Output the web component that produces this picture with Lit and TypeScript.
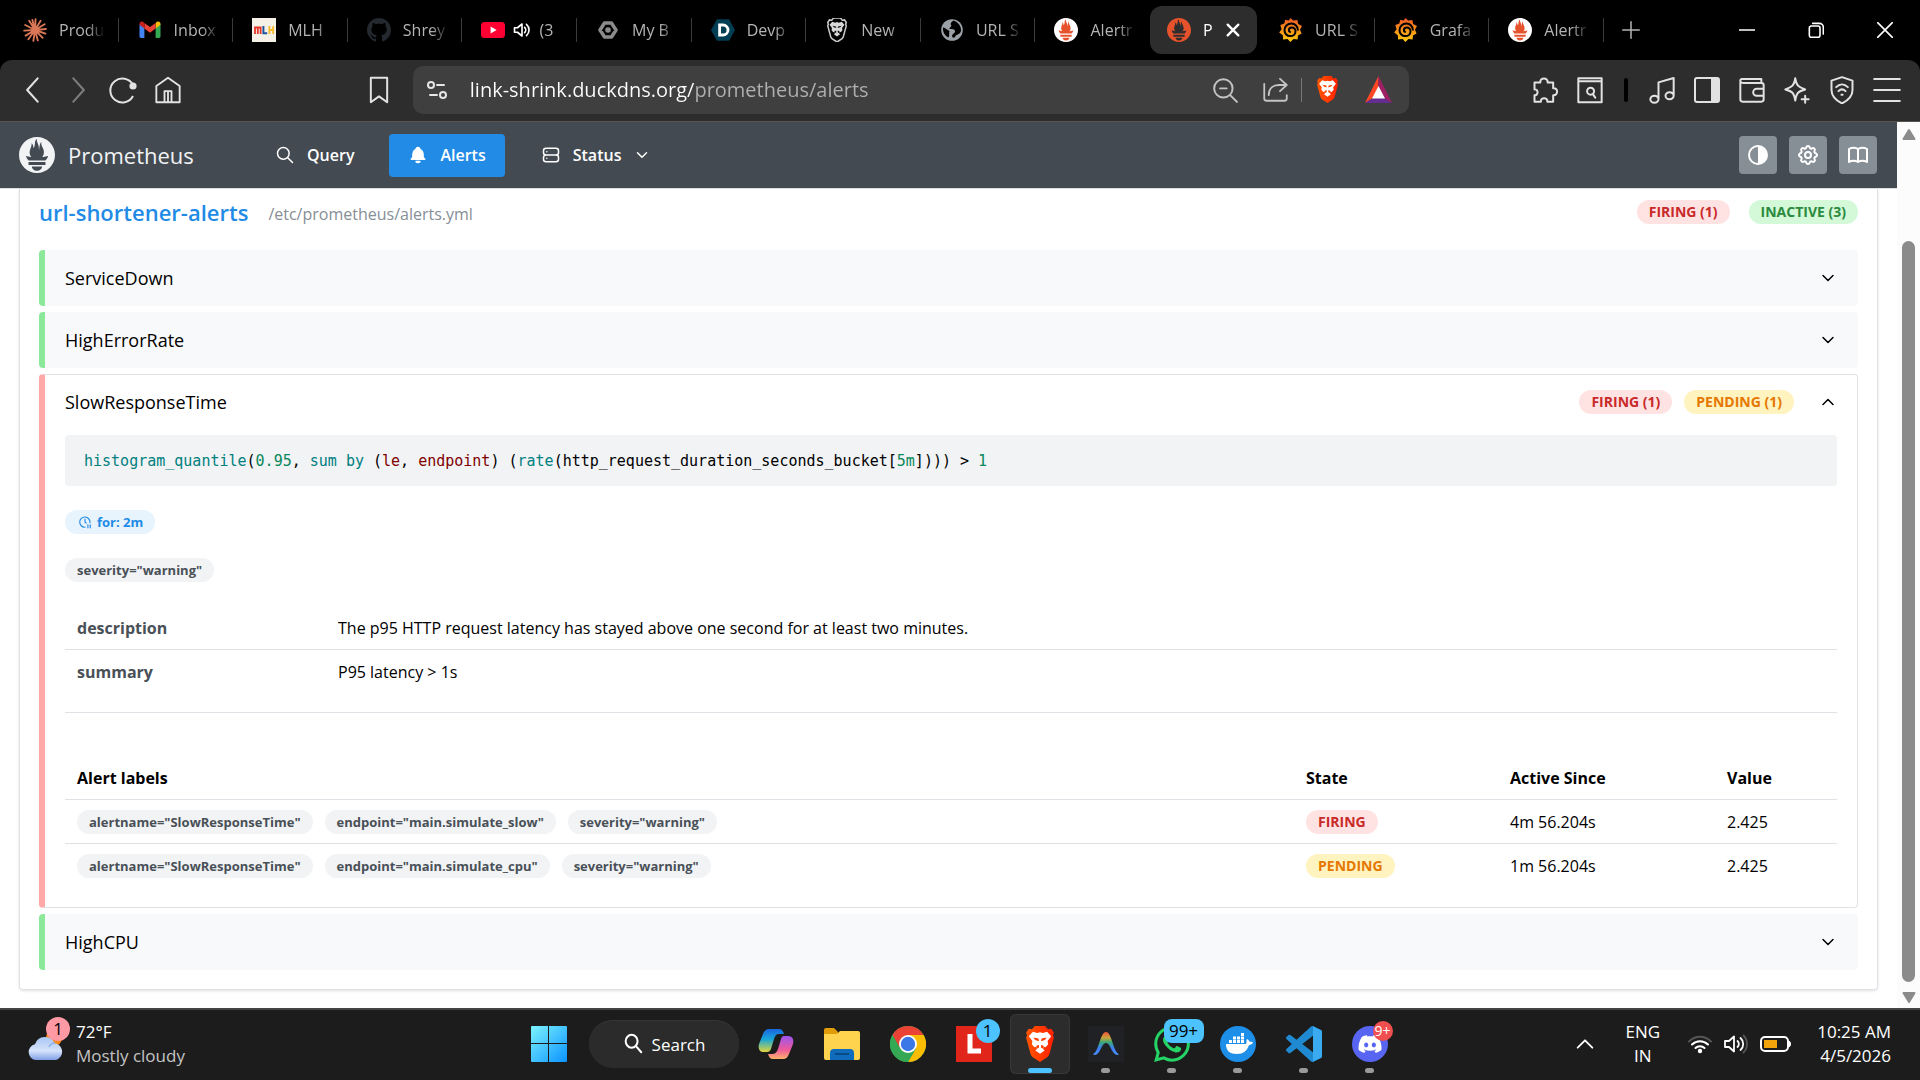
import { LitElement, html, css, svg, nothing } from "lit";
import type { TemplateResult } from "lit";
import { customElement, state } from "lit/decorators.js";
import { classMap } from "lit/directives/class-map.js";

const TORCH =
  "M12 0C5.373 0 0 5.372 0 12c0 6.627 5.373 12 12 12s12-5.373 12-12c0-6.628-5.373-12-12-12zm0 22.46c-1.885 0-3.414-1.26-3.414-2.814h6.828c0 1.553-1.528 2.813-3.414 2.813zm5.64-3.745H6.36v-2.046h11.28v2.046zm-.04-3.098H6.391c-.037-.043-.075-.086-.111-.13-1.155-1.401-1.427-2.133-1.69-2.879-.005-.025 1.4.287 2.395.511 0 0 .513.119 1.262.255-.72-.843-1.147-1.915-1.147-3.01 0-2.406 1.845-4.508 1.18-6.207.648.053 1.34 1.367 1.387 3.422.689-.951.977-2.69.977-3.755 0-1.103.727-2.385 1.454-2.429-.648 1.069.168 1.984.894 4.256.272.854.237 2.29.447 3.201.07-1.892.395-4.652 1.595-5.605-.529 1.2.079 2.702.494 3.424.671 1.164 1.078 2.047 1.078 3.716a4.642 4.642 0 01-1.11 2.996c.792-.149 1.34-.283 1.34-.283l2.573-.502s-.374 1.538-1.81 3.019z";

/** Wraps shapes in a square svg of the given size. */
const icon = (size: number, box: string, body: TemplateResult<2>) =>
  html`<svg width=${size} height=${size} viewBox=${box} aria-hidden="true">${body}</svg>`;

/** Outline icon on a 24 unit grid that takes the text colour. */
const line = (size: number, d: string, width = 2) =>
  icon(
    size,
    "0 0 24 24",
    svg`<path d=${d} fill="none" stroke="currentColor" stroke-width=${width} stroke-linecap="round" stroke-linejoin="round"/>`
  );

const promWhite = icon(
  24,
  "0 0 24 24",
  svg`<circle cx="12" cy="12" r="11.500" fill="#e6522c"/><path d=${TORCH} fill="#fff"/>`
);
const promOrange = icon(
  24,
  "0 0 24 24",
  svg`<circle cx="12" cy="12" r="11" fill="#2d2d2d"/><path d=${TORCH} fill="#e6522c"/>`
);

const claude = icon(
  24,
  "0 0 24 24",
  svg`<g stroke="#d97757" stroke-width="1.9" stroke-linecap="round">
    <path d="M12 12L12.6 1.2M12 12L17.6 2.8M12 12L21.6 6.2M12 12L23 11M12 12L22.4 15.6M12 12L19.6 19.8M12 12L14.8 22.4M12 12L10.4 22.8M12 12L5.4 21.2M12 12L2.6 17.6M12 12L1.2 12.6M12 12L2.2 7M12 12L6.2 2.8M12 12L9.4 2"/></g>`
);

const gmail = icon(
  24,
  "0 0 24 24",
  svg`<path d="M1.5 6v12.6A1.5 1.5 0 0 0 3 20h3.4V9.6z" fill="#4285f4"/>
    <path d="M22.5 6v12.6A1.5 1.5 0 0 1 21 20h-3.4V9.6z" fill="#34a853"/>
    <path d="M17.6 4.9v5.6l4.9-3.7V6c0-2.3-2.4-3-3.8-2z" fill="#fbbc04"/>
    <path d="M6.4 10.5V4.9l5.6 4.2 5.6-4.2v5.6L12 14.8z" fill="#ea4335"/>
    <path d="M1.5 6v.8l4.9 3.7V4.9L5.3 4C3.900 3 1.500 3.700 1.500 6z" fill="#c5221f"/>`
);

const mlh = icon(
  24,
  "0 0 24 24",
  svg`<rect width="24" height="24" fill="#f6f1e7"/>
    <path d="M3 16V9.500h5.600V16M5.800 9.500V16" fill="none" stroke="#e73427" stroke-width="1.800"/>
    <path d="M11.400 8v7.200h3.800" fill="none" stroke="#1d539f" stroke-width="2"/>
    <path d="M17.400 8v8M21.200 8v8M17.400 12h4" fill="none" stroke="#f8b92a" stroke-width="1.800"/>`
);

const github = icon(
  24,
  "0 0 16 16",
  svg`<path fill="#24292f" d="M8 0C3.58 0 0 3.58 0 8c0 3.54 2.29 6.53 5.47 7.59.4.07.55-.17.55-.38 0-.19-.01-.82-.01-1.49-2.01.37-2.53-.49-2.69-.94-.09-.23-.48-.94-.82-1.13-.28-.15-.68-.52-.01-.53.63-.01 1.08.58 1.23.82.72 1.21 1.87.87 2.33.66.07-.52.28-.87.51-1.07-1.78-.2-3.64-.89-3.64-3.95 0-.87.31-1.59.82-2.15-.08-.2-.36-1.02.08-2.12 0 0 .67-.21 2.2.82.64-.18 1.32-.27 2-.27s1.36.09 2 .27c1.53-1.04 2.2-.82 2.2-.82.44 1.1.16 1.92.08 2.12.51.56.82 1.27.82 2.15 0 3.07-1.87 3.75-3.65 3.95.29.25.54.73.54 1.48 0 1.07-.01 1.93-.01 2.2 0 .21.15.46.55.38A8.01 8.01 0 0016 8c0-4.42-3.58-8-8-8z"/>`
);

const youtube = icon(
  24,
  "0 0 24 24",
  svg`<rect y="4" width="24" height="16" rx="3.500" fill="#ff0033"/><path d="M9.600 8.600v6.800l6-3.400z" fill="#fff"/>`
);

const speakerTab = icon(
  18,
  "0 0 24 24",
  svg`<path d="M2 9v6h4l6 5V4L6 9z" fill="none" stroke="#fff" stroke-width="2.200" stroke-linejoin="round"/>
    <path d="M15.500 8.500a5 5 0 0 1 0 7M18 4.500a10 10 0 0 1 0 15" fill="none" stroke="#fff" stroke-width="2.200" stroke-linecap="round"/>`
);

const gcp = icon(
  24,
  "0 0 24 24",
  svg`<path d="M8.500 5h7l4.500 7-4.500 7h-7L4 12z" fill="none" stroke="#8b8b8b" stroke-width="3.600" stroke-linejoin="round"/>
    <circle cx="12" cy="12" r="2.800" fill="#8b8b8b"/><path d="M17 2l4 7M7 22l-4-7" stroke="#000" stroke-width="1.200"/>`
);

const devpost = icon(
  24,
  "0 0 24 24",
  svg`<path d="M6 1.200h12l6 10.800-6 10.800H6L0 12z" fill="#003e54"/>
    <path d="M8.600 7h3.400a5 5 0 0 1 0 10H8.600z" fill="none" stroke="#fff" stroke-width="2.800"/>`
);

const LION_HEAD =
  "M8 0h8l2.200 2.500 2.600-.3 2 3-.7 2 .7 2-3.600 13.200-1.300 1.800L12 28l-5.900-3.800-1.300-1.800L1.200 9.200l.7-2-.7-2 2-3 2.600.3z";
const LION_FACE =
  "M12 4.800l2.200.6 3.300-1 3.200 3.600-2.800 3.600.5 2.600-2 2.400-1.400-.5-.6 1.800 1.200 1.100L12 21.600 8.400 19l1.200-1.100-.6-1.800-1.400.5-2-2.400.5-2.600L3.300 8l3.200-3.600 3.300 1z";
const LION_LINES =
  "M6.800 9l4 .8.400 2-3-1zM17.200 9l-4 .8-.4 2 3-1zM9 15.500l2-1 .3 2.200-1.700 1zM15 15.500l-2-1-.3 2.200 1.700 1z";

const brave = (size: number) =>
  icon(
    size,
    "-2 0 28 28",
    svg`<linearGradient id="lion" x1="0" x2="1"><stop offset="0" stop-color="#ff5500"/><stop offset="1" stop-color="#ff2000"/></linearGradient>
      <path d=${LION_HEAD} fill="url(#lion)"/><path d=${LION_FACE} fill="#fff"/><path d=${LION_LINES} fill="#ff4000"/>`
  );

const braveMono = icon(
  24,
  "-2 0 28 28",
  svg`<path d=${LION_HEAD} fill="none" stroke="#c9c9c9" stroke-width="1.800"/>
    <path d=${LION_FACE} fill="#d8d8d8"/><path d=${LION_LINES} fill="#111"/>`
);

const globe = icon(
  24,
  "0 0 24 24",
  svg`<circle cx="12" cy="12" r="10.800" fill="#9aa0a6"/>
    <path d="M13.500 2.500c-1 1-3.500 2-2.500 4.500 1.500 1.500-2 2.500-1.500 4 2.500.5 5-.5 5.500 2s-3 2.500-3 5.500c1 1.500 2.500 1.500 3 .5 1-3 5-2 6-6 .5-5-3-9-7.500-10.500z" fill="#000"/>
    <path d="M3 9.500c2.500 0 4 2.500 6.500 3.500-1 2 .5 4-1 6.500C5 18 2.500 14 3 9.500z" fill="#000"/>`
);

const grafana = icon(
  24,
  "0 0 24 24",
  svg`<linearGradient id="graf" x1="0" y1="0" x2="0" y2="1"><stop offset="0" stop-color="#f05a28"/><stop offset="1" stop-color="#fbca0a"/></linearGradient>
    <path d="M11.500 0l2.700 2.600 4.200-.6.800 4 3.800 2-2 3.700 1.600 3.900-3.600 1.900-.4 4-4-.5-3.300 3-2.700-3-4.500.500-.3-4.200L.2 14.500l2.400-3.300L1.300 7l4-1.600.9-3.700 3.500.8z" fill="url(#graf)"/>
    <path d="M19 12.500c0-4-3-7-6.600-7-4 0-6.900 3-6.900 6.700 0 3.500 2.700 5.900 5.700 5.900 3.200 0 5.300-2.200 5.300-4.900 0-2.200-1.700-3.800-3.700-3.800-1.800 0-2.900 1.300-2.900 2.700 0 1.200.8 2 1.900 2" fill="none" stroke="#000" stroke-width="2"/>`
);

const braveTriangle = icon(
  27,
  "0 0 27 27",
  svg`<path d="M13.500 0L0 27l8-5 5.500-11z" fill="#ff4724"/><path d="M13.500 0L27 27l-8-5-5.500-11z" fill="#9e1f63"/>
    <path d="M0 27h27l-8-5H8z" fill="#662d91"/><path d="M13.500 10L20 22.500H7z" fill="#fff"/>`
);

const cloud = icon(
  38,
  "0 0 38 38",
  svg`<linearGradient id="cl" x1="0" y1="0" x2="0" y2="1"><stop offset="0" stop-color="#a9c6f5"/><stop offset=".6" stop-color="#d6e3fa"/><stop offset="1" stop-color="#7fa0e8"/></linearGradient>
    <circle cx="27" cy="13" r="8" fill="#f58a1f"/>
    <path d="M9 35a8 8 0 0 1-1-15.800 10.500 10.500 0 0 1 19.500-1A8.600 8.600 0 0 1 29 35z" fill="url(#cl)"/>
    <path d="M22 22a7 7 0 0 1 6-4" fill="none" stroke="#8eb0ee" stroke-width="1.500"/>`
);

const start = icon(
  36,
  "0 0 36 36",
  svg`<linearGradient id="win" x1="0" y1="0" x2="1" y2="1"><stop offset="0" stop-color="#7df3ff"/><stop offset="1" stop-color="#0a93ff"/></linearGradient>
    <path d="M1 0h16v17H0V1a1 1 0 0 1 1-1zM18 0h17a1 1 0 0 1 1 1v16H18zM0 18h17v18H1a1 1 0 0 1-1-1zM18 18h18v17a1 1 0 0 1-1 1H18z" fill="url(#win)"/>`
);

const copilot = icon(
  36,
  "0 0 36 36",
  svg`<linearGradient id="cpa" x1="0" y1="0" x2="0" y2="1"><stop offset="0" stop-color="#1a66e0"/><stop offset=".45" stop-color="#18a6d8"/><stop offset="1" stop-color="#e3d53a"/></linearGradient>
    <linearGradient id="cpb" x1="0" y1="0" x2="0" y2="1"><stop offset="0" stop-color="#9a55f0"/><stop offset=".6" stop-color="#f05a9a"/><stop offset="1" stop-color="#ffb26b"/></linearGradient>
    <path d="M11 3h10c3 0 4 2 5 5h-5c-3 0-4 2-5 5l-3 10c-1 2-2 3-4 3H6c-5 0-6-4-5-8L5 8c1-3 3-5 6-5z" fill="url(#cpa)"/>
    <path d="M25 33H15c-3 0-4-2-5-5h4c3 0 5-2 6-5l3-10c1-3 2-3 4-3h3c5 0 6 4 5 8l-4 10c-1 3-3 5-6 5z" fill="url(#cpb)"/>`
);

const folder = icon(
  36,
  "0 0 36 36",
  svg`<path d="M0 4a2 2 0 0 1 2-2h8l4 4v6H0z" fill="#e09c09"/>
    <path d="M0 8h13l3-3h18a2 2 0 0 1 2 2v25a2 2 0 0 1-2 2H2a2 2 0 0 1-2-2z" fill="#ffd34e"/>
    <path d="M6 34V27a4 4 0 0 1 4-4h16a4 4 0 0 1 4 4v7z" fill="#0f6cbd"/><path d="M11 28h14" stroke="#084a86" stroke-width="2"/>`
);

const chrome = icon(
  36,
  "0 0 36 36",
  svg`<circle cx="18" cy="18" r="18" fill="#34a853"/>
    <path d="M18 9h15.600A18 18 0 0 1 18 36l7.800-13.500z" fill="#fbbc04"/>
    <path d="M2.400 9A18 18 0 0 1 33.600 9H18l-7.800 13.500z" fill="#ea4335"/>
    <path d="M2.400 9l7.800 13.500L25.800 22.500 18 36A18 18 0 0 1 2.400 9z" fill="#34a853"/>
    <circle cx="18" cy="18" r="9" fill="#fff"/><circle cx="18" cy="18" r="7.200" fill="#3b78e7"/>`
);

const redL = icon(
  36,
  "0 0 36 36",
  svg`<rect width="36" height="36" fill="#e1251b"/><path d="M14 8v17h11" fill="none" stroke="#fff" stroke-width="5"/>`
);

const arch = icon(
  36,
  "0 0 36 36",
  svg`<linearGradient id="ar" x1="0" y1="0" x2="0" y2="1"><stop offset="0" stop-color="#f0553a"/><stop offset=".25" stop-color="#c9a53a"/><stop offset=".45" stop-color="#3aa87a"/><stop offset=".7" stop-color="#3f7df5"/><stop offset="1" stop-color="#4a90ff"/></linearGradient>
    <rect width="36" height="36" fill="#202124"/>
    <path d="M5 28c6-2 7-22 13-22s7 20 13 22c-1 2-4 1-6-2-3-5-4-9-7-9s-4 4-7 9c-2 3-5 4-6 2z" fill="url(#ar)"/>`
);

const whatsapp = icon(
  36,
  "0 0 24 24",
  svg`<path fill="#25d366" d="M17.472 14.382c-.297-.149-1.758-.867-2.03-.967-.273-.099-.471-.148-.67.15-.197.297-.767.966-.94 1.164-.173.199-.347.223-.644.075-.297-.15-1.255-.463-2.39-1.475-.883-.788-1.48-1.761-1.653-2.059-.173-.297-.018-.458.13-.606.134-.133.298-.347.446-.52.149-.174.198-.298.298-.497.099-.198.05-.371-.025-.52-.075-.149-.669-1.612-.916-2.207-.242-.579-.487-.5-.669-.51-.173-.008-.371-.01-.57-.01-.198 0-.52.074-.792.372-.272.297-1.04 1.016-1.04 2.479 0 1.462 1.065 2.875 1.213 3.074.149.198 2.096 3.2 5.077 4.487.709.306 1.262.489 1.694.625.712.227 1.36.195 1.871.118.571-.085 1.758-.719 2.006-1.413.248-.694.248-1.289.173-1.413-.074-.124-.272-.198-.57-.347m-5.421 7.403h-.004a9.87 9.87 0 01-5.031-1.378l-.361-.214-3.741.982.998-3.648-.235-.374a9.86 9.86 0 01-1.51-5.26c.001-5.45 4.436-9.884 9.888-9.884 2.64 0 5.122 1.03 6.988 2.898a9.825 9.825 0 012.893 6.994c-.003 5.45-4.437 9.884-9.885 9.884m8.413-18.297A11.815 11.815 0 0012.05 0C5.495 0 .16 5.335.157 11.892c0 2.096.547 4.142 1.588 5.945L.057 24l6.305-1.654a11.882 11.882 0 005.683 1.448h.005c6.554 0 11.89-5.335 11.893-11.893a11.821 11.821 0 00-3.48-8.413z"/>`
);

const docker = icon(
  36,
  "0 0 36 36",
  svg`<circle cx="18" cy="18" r="18" fill="#1d8fe8"/>
    <path d="M6 18h20c1-2 0-4 1-5 2 1 2 2 3 3 1-.5 3 0 3 .5-1 2-3 2.500-4 2.500-2 6-6 9-12 9-7 0-11-3-11-10z" fill="#fff"/>
    <path d="M9 14h3v3H9zM13 14h3v3h-3zM17 14h3v3h-3zM21 14h3v3h-3zM13 10.500h3v3h-3zM17 10.500h3v3h-3zM21 10.500h3v3h-3zM21 7h3v3h-3z" fill="#fff"/>`
);

const vscode = icon(
  36,
  "0 0 24 24",
  svg`<path fill="#1f8ad2" d="M23.150 2.587L18.210.210a1.494 1.494 0 0 0-1.705.290l-9.460 8.630-4.120-3.128a.999.999 0 0 0-1.276.057L.327 7.261A1 1 0 0 0 .326 8.740L3.899 12 .326 15.260a1 1 0 0 0 .001 1.479L1.650 17.940a.999.999 0 0 0 1.276.057l4.120-3.128 9.460 8.630a1.492 1.492 0 0 0 1.704.290l4.942-2.377A1.500 1.500 0 0 0 24 20.060V3.939a1.500 1.500 0 0 0-.850-1.352zm-5.146 14.861L10.826 12l7.178-5.448v10.896z"/>
    <path fill="#3aabf0" d="M18 .2l5.200 2.400a1.500 1.500 0 0 1 .8 1.300V20a1.500 1.500 0 0 1-.8 1.300L18 23.800z"/>`
);

const discord = icon(
  36,
  "0 0 36 36",
  svg`<circle cx="18" cy="18" r="18" fill="#5865f2"/>
    <path transform="translate(6.500 6.500) scale(.96)" fill="#fff" d="M20.317 4.3698a19.7913 19.7913 0 00-4.8851-1.5152.0741.0741 0 00-.0785.0371c-.211.3753-.4447.8648-.6083 1.2495-1.8447-.2762-3.68-.2762-5.4868 0-.1636-.3933-.4058-.8742-.6177-1.2495a.077.077 0 00-.0785-.037 19.7363 19.7363 0 00-4.8852 1.515.0699.0699 0 00-.0321.0277C.5334 9.0458-.319 13.5799.0992 18.0578a.0824.0824 0 00.0312.0561c2.0528 1.5076 4.0413 2.4228 5.9929 3.0294a.0777.0777 0 00.0842-.0276c.4616-.6304.8731-1.2952 1.226-1.9942a.076.076 0 00-.0416-.1057c-.6528-.2476-1.2743-.5495-1.8722-.8923a.077.077 0 01-.0076-.1277c.1258-.0943.2517-.1923.3718-.2914a.0743.0743 0 01.0776-.0105c3.9278 1.7933 8.18 1.7933 12.0614 0a.0739.0739 0 01.0785.0095c.1202.099.246.1981.3728.2924a.077.077 0 01-.0066.1276 12.2986 12.2986 0 01-1.873.8914.0766.0766 0 00-.0407.1067c.3604.698.7719 1.3628 1.225 1.9932a.076.076 0 00.0842.0286c1.961-.6067 3.9495-1.5219 6.0023-3.0294a.077.077 0 00.0313-.0552c.5004-5.177-.8382-9.6739-3.5485-13.6604a.061.061 0 00-.0312-.0286zM8.02 15.3312c-1.1825 0-2.1569-1.0857-2.1569-2.419 0-1.3332.9555-2.4189 2.157-2.4189 1.2108 0 2.1757 1.0952 2.1568 2.419 0 1.3332-.9555 2.4189-2.1569 2.4189zm7.9748 0c-1.1825 0-2.1569-1.0857-2.1569-2.419 0-1.3332.9554-2.4189 2.1569-2.4189 1.2108 0 2.1757 1.0952 2.1568 2.419 0 1.3332-.946 2.4189-2.1568 2.4189Z"/>`
);

interface Tab {
  title: string;
  icon: unknown;
  active?: boolean;
  audio?: boolean;
}

const TABS: Tab[] = [
  { title: "Produ", icon: claude },
  { title: "Inbox", icon: gmail },
  { title: "MLH", icon: mlh },
  { title: "Shrey", icon: github },
  { title: "(3", icon: youtube, audio: true },
  { title: "My B", icon: gcp },
  { title: "Devp", icon: devpost },
  { title: "New", icon: braveMono },
  { title: "URL S", icon: globe },
  { title: "Alertr", icon: promWhite },
  { title: "P", icon: promOrange, active: true },
  { title: "URL S", icon: grafana },
  { title: "Grafa", icon: grafana },
  { title: "Alertr", icon: promWhite },
];

interface App {
  name: string;
  icon: unknown;
  badge?: string;
  mark?: "active" | "open";
  red?: boolean;
}

const APPS: App[] = [
  { name: "Copilot", icon: copilot },
  { name: "Files", icon: folder },
  { name: "Chrome", icon: chrome },
  { name: "L", icon: redL, badge: "1" },
  { name: "Brave", icon: brave(36), mark: "active" },
  { name: "Arch", icon: arch, mark: "open" },
  { name: "WhatsApp", icon: whatsapp, badge: "99+", mark: "open" },
  { name: "Docker", icon: docker, mark: "open" },
  { name: "Code", icon: vscode, mark: "open" },
  { name: "Discord", icon: discord, badge: "9+", mark: "open", red: true },
];

interface ActiveAlert {
  labels: string[];
  state: "firing" | "pending";
  since: string;
  value: string;
}

interface Rule {
  name: string;
  health: "inactive" | "firing";
  counts: { state: string; count: number }[];
}

const RULES: Rule[] = [
  { name: "ServiceDown", health: "inactive", counts: [] },
  { name: "HighErrorRate", health: "inactive", counts: [] },
  {
    name: "SlowResponseTime",
    health: "firing",
    counts: [
      { state: "firing", count: 1 },
      { state: "pending", count: 1 },
    ],
  },
  { name: "HighCPU", health: "inactive", counts: [] },
];

const ALERTS: ActiveAlert[] = [
  {
    labels: ['alertname="SlowResponseTime"', 'endpoint="main.simulate_slow"', 'severity="warning"'],
    state: "firing",
    since: "4m 56.204s",
    value: "2.425",
  },
  {
    labels: ['alertname="SlowResponseTime"', 'endpoint="main.simulate_cpu"', 'severity="warning"'],
    state: "pending",
    since: "1m 56.204s",
    value: "2.425",
  },
];

const ANNOTATIONS = [
  ["description", "The p95 HTTP request latency has stayed above one second for at least two minutes."],
  ["summary", "P95 latency > 1s"],
];

const CHEVRON = "M6 9l6 6l6 -6";

@customElement("app-root")
export class AppRoot extends LitElement {
  @state() private open = new Set(["SlowResponseTime"]);

  static styles = css`
    :host {
      display: flex;
      flex-direction: column;
      min-height: 100vh;
      background: #fff;
      color: #000;
      font-family: "Open Sans", "Noto Sans", sans-serif;
      font-size: 16px;
    }
    * {
      box-sizing: border-box;
    }
    button {
      border: 0;
      padding: 0;
      margin: 0;
      background: none;
      color: inherit;
      font: inherit;
      display: flex;
      align-items: center;
      justify-content: center;
    }
    svg {
      display: block;
      flex: none;
    }
    a {
      color: inherit;
      text-decoration: none;
    }

    .strip {
      display: flex;
      height: 60px;
      padding-left: 4px;
      background: #000;
      color: #b4b4b4;
    }
    .tabs {
      display: flex;
      flex: 1;
      min-width: 0;
    }
    .tab {
      flex: 1;
      min-width: 0;
      display: flex;
      align-items: center;
      padding: 6px 0;
    }
    .tab::after {
      content: "";
      width: 1px;
      height: 24px;
      background: #3a3a3a;
    }
    .tab.active::after,
    .tab.before-active::after {
      visibility: hidden;
    }
    .tab-body {
      flex: 1;
      min-width: 0;
      justify-content: flex-start;
      gap: 12px;
      height: 48px;
      padding: 0 6px 0 19px;
    }
    .tab-body.audio {
      gap: 8px;
    }
    .tab.active {
      flex: 0 0 110px;
    }
    .tab.active .tab-body {
      background: #2d2d2d;
      border-radius: 12px;
      margin-right: 2px;
      padding: 0 16px 0 17px;
      color: #fff;
    }
    .tab-title {
      flex: 1;
      overflow: hidden;
      white-space: nowrap;
      text-align: left;
      mask-image: linear-gradient(90deg, #000 28px, transparent 46px);
    }
    .window {
      display: flex;
      width: 316px;
      color: #fff;
    }
    .window button {
      flex: 1;
    }
    .window .add {
      flex: 0 0 108px;
      justify-content: flex-start;
      padding-left: 18px;
      color: #b4b4b4;
    }

    .corners {
      background: #000;
    }
    .toolbar {
      display: flex;
      align-items: center;
      height: 62px;
      padding: 0 19px 2px 19px;
      background: #2d2d2d;
      border-bottom: 1px solid #55524f;
      border-radius: 12px 12px 0 0;
      color: #e2e2e2;
    }
    .nav {
      display: flex;
      gap: 17px;
      flex: 4 1 0;
    }
    .nav .dim {
      color: #7d7d7d;
    }
    .nav .bookmark {
      margin-left: auto;
      margin-right: 20px;
    }
    .address {
      display: flex;
      align-items: center;
      flex: 0 1 996px;
      height: 48px;
      border-radius: 10px;
      background: #3f3f3f;
      padding: 0 17px 0 10px;
      color: #c4c4c4;
    }
    .url {
      flex: 1;
      min-width: 0;
      margin-left: 19px;
      padding: 0;
      border: 0;
      outline: 0;
      font: inherit;
      font-size: 20px;
      color: transparent;
      background: linear-gradient(90deg, #fff 225px, #b0b0b0 225px);
      background-clip: text;
      -webkit-background-clip: text;
    }
    .address-tools {
      display: flex;
      align-items: center;
      gap: 24px;
    }
    .rule {
      width: 1px;
      height: 24px;
      margin: 0 -12px;
      background: #777;
    }
    .extras {
      display: flex;
      align-items: center;
      justify-content: flex-end;
      gap: 17px;
      flex: 5 1 0;
    }
    .mark {
      width: 4px;
      height: 24px;
      margin: 0 3px;
      border-radius: 2px;
      background: #000;
    }

    .view {
      display: grid;
      grid-template-columns: minmax(0, 1fr) 23px;
      flex: 1;
    }
    .header {
      display: flex;
      align-items: center;
      height: 67px;
      padding: 0 20px 0 19px;
      background: #434a51;
      border-bottom: 1px solid #dee2e6;
      color: #fff;
    }
    .brand {
      display: flex;
      align-items: center;
      gap: 13px;
      font-size: 22px;
      color: #f1f3f5;
      width: 228px;
    }
    .menu {
      display: flex;
      gap: 8px;
      flex: 1;
      font-weight: 600;
    }
    .menu a,
    .menu button {
      display: flex;
      align-items: center;
      gap: 12px;
      height: 43px;
      padding: 0 19px 0 28px;
      border-radius: 4px;
    }
    .menu .current {
      background: #228be6;
      margin-left: 8px;
      padding: 0 19px;
    }
    .tools {
      display: flex;
      gap: 12px;
    }
    .tools button {
      width: 38px;
      height: 38px;
      border-radius: 4px;
      background: #868e96;
    }
    .card {
      margin: 0 19px 18px;
      padding: 5px 19px 19px;
      border: 1px solid #dee2e6;
      border-top: 0;
      border-radius: 0 0 4px 4px;
      box-shadow: 0 1px 3px rgba(0, 0, 0, 0.12);
    }
    .group {
      display: flex;
      align-items: center;
      height: 36px;
      margin-bottom: 20px;
    }
    .group h2 {
      margin: 0 20px 0 0;
      font-size: 22px;
      line-height: 36px;
      font-weight: 600;
      color: #228be6;
    }
    .file {
      flex: 1;
      padding-top: 4px;
      color: #868e96;
    }
    .badges {
      display: flex;
      gap: 12px;
    }
    .group .badges {
      gap: 19px;
    }
    .badge {
      display: inline-flex;
      align-items: center;
      gap: 5px;
      height: 24px;
      padding: 0 12px;
      border-radius: 12px;
      background: #f1f3f5;
      color: #495057;
      font-size: 13px;
      line-height: 24px;
      font-weight: 700;
      white-space: nowrap;
    }
    .badge.firing,
    .badge.pending,
    .badge.inactive {
      font-size: 14px;
      text-transform: uppercase;
    }
    .badge.firing {
      background: #ffe3e3;
      color: #c92a2a;
    }
    .badge.pending {
      background: #fff3bf;
      color: #e67700;
    }
    .badge.inactive {
      background: #d3f9d8;
      color: #2b8a3e;
    }
    .badge.for {
      background: #e7f3fd;
      color: #228be6;
      padding-left: 13px;
    }

    .rules {
      display: flex;
      flex-direction: column;
      gap: 6px;
    }
    .item {
      border-radius: 4px;
      background: #f8f9fa;
      border-left: 6px solid #8ce99a;
    }
    .item.firing {
      border-left-color: #ffa8a8;
    }
    .item.expanded {
      background: #fff;
      border-top: 1px solid #dee2e6;
      border-right: 1px solid #dee2e6;
      border-bottom: 1px solid #dee2e6;
    }
    .item h3 {
      margin: 0;
      font-size: 18px;
      font-weight: 400;
    }
    .item-head {
      width: 100%;
      height: 56px;
      padding: 0 20px;
      text-align: left;
    }
    .item.expanded .item-head {
      height: 54px;
      padding-right: 19px;
    }
    .item-name {
      flex: 1;
    }
    .item-head .badges {
      margin-right: 24px;
    }
    .up {
      transform: rotate(180deg);
    }
    .body {
      padding: 6px 20px 20px;
    }
    .code {
      margin: 0 0 24px;
      padding: 15px 19px 13px;
      border-radius: 4px;
      background: #f1f3f5;
      font-family: "DejaVu Sans Mono", monospace;
      font-size: 15px;
      line-height: 23px;
    }
    .fn {
      color: #008080;
    }
    .num {
      color: #09885a;
    }
    .lab {
      color: #800000;
    }
    .line {
      display: flex;
      margin-bottom: 24px;
    }
    table {
      width: 100%;
      table-layout: fixed;
      border-collapse: separate;
      border-spacing: 0;
    }
    th,
    td {
      height: 43px;
      padding: 0 12px;
      text-align: left;
      vertical-align: middle;
    }
    th {
      font-weight: 700;
    }
    td .badge {
      display: flex;
      width: max-content;
    }
    .notes th {
      width: 261px;
      color: #495057;
    }
    .notes tr:not(:last-child) > *,
    .alerts thead th,
    .alerts tbody tr:not(:last-child) > * {
      height: 44px;
      border-bottom: 1px solid #dee2e6;
    }
    .notes {
      margin-bottom: 19px;
    }
    .alerts {
      border-top: 1px solid #dee2e6;
      padding-top: 43px;
    }
    .c-state {
      width: 204px;
    }
    .c-since {
      width: 217px;
    }
    .c-value {
      width: 122px;
    }

    .scroll {
      display: flex;
      flex-direction: column;
      align-items: center;
      padding: 6px 0 4px;
      background: #fcfcfc;
      color: #8b8b8b;
    }
    .thumb {
      flex: 1;
      width: 13px;
      margin: 99px 0 8px;
      border-radius: 7px;
      background: #8b8b8b;
    }

    .taskbar {
      display: grid;
      grid-template-columns: 1fr auto 1fr;
      align-items: center;
      height: 72px;
      padding: 0 29px 2px 27px;
      border-top: 2px solid #444;
      background: #1c1c1c;
      color: #fff;
      font-size: 17px;
    }
    .weather {
      position: relative;
      justify-self: start;
      gap: 11px;
      line-height: 24px;
      text-align: left;
    }
    .reading {
      display: flex;
      flex-direction: column;
    }
    .soft {
      color: #c4c4c4;
    }
    .bubble {
      position: absolute;
      display: flex;
      align-items: center;
      justify-content: center;
      min-width: 24px;
      height: 24px;
      border-radius: 12px;
      line-height: 24px;
      color: #000;
      background: #4cc2ff;
    }
    .weather .bubble {
      left: 19px;
      top: -3px;
      background: #ff99a4;
    }
    .apps {
      display: flex;
      align-items: center;
      gap: 6px;
    }
    .app {
      position: relative;
      width: 60px;
      height: 60px;
      border-radius: 6px;
    }
    .app.active {
      background: #2c2c2c;
      box-shadow: inset 0 0 0 1px #383838;
    }
    .app::after {
      content: "";
      position: absolute;
      bottom: 1px;
      width: 0;
      height: 5px;
      border-radius: 3px;
      background: #9a9a9a;
    }
    .app.open::after {
      width: 9px;
    }
    .app.active::after {
      width: 24px;
      background: #4cc2ff;
    }
    .app .bubble {
      left: 32px;
      top: 5px;
    }
    .app .wide {
      left: 22px;
      min-width: 40px;
      border-radius: 8px;
    }
    .app .red {
      left: 33px;
      top: 7px;
      min-width: 20px;
      height: 20px;
      line-height: 20px;
      font-size: 14px;
      background: #f04f4f;
      color: #fff;
    }
    .search {
      width: 150px;
      height: 48px;
      margin: 0 1px 0 4px;
      border-radius: 24px;
      gap: 8px;
      background: #2b2b2b;
      box-shadow: inset 0 1px 0 #353535;
    }
    .tray {
      display: flex;
      align-items: center;
      justify-content: flex-end;
      line-height: 24px;
    }
    .lang {
      flex-direction: column;
      margin: 0 28px 0 30px;
    }
    .status {
      gap: 12px;
      margin-right: 26px;
    }
    .clock {
      flex-direction: column;
      align-items: flex-end;
    }
  `;

  private toggle(name: string) {
    const next = new Set(this.open);
    if (!next.delete(name)) next.add(name);
    this.open = next;
  }

  private renderTabs() {
    return html`<div class="strip">
      <div class="tabs">
        ${TABS.map(
          (t, i) => html`<div
            class=${classMap({
              tab: true,
              active: !!t.active,
              "before-active": !!TABS[i + 1]?.active,
            })}
          >
            <button class=${classMap({ "tab-body": true, audio: !!t.audio })}>
              ${t.icon}${t.audio ? speakerTab : nothing}<span class="tab-title">${t.title}</span>
              ${t.active ? line(16, "M4 4l16 16M20 4L4 20", 3.5) : nothing}
            </button>
          </div>`
        )}
      </div>
      <div class="window">
        <button class="add" aria-label="New tab">${line(18, "M12 1v22M1 12h22")}</button>
        <button aria-label="Minimize">${line(16, "M1 12h22", 2.6)}</button>
        <button aria-label="Restore">
          ${line(16, "M4 6h11a3 3 0 0 1 3 3v11a3 3 0 0 1-3 3H5a3 3 0 0 1-3-3V9a3 3 0 0 1 3-3M7 2h10a6 6 0 0 1 6 6v10", 2.4)}
        </button>
        <button aria-label="Close">${line(16, "M1 1l22 22M23 1L1 23", 2.4)}</button>
      </div>
    </div>`;
  }

  private renderToolbar() {
    return html`<div class="corners">
      <div class="toolbar">
        <div class="nav">
          <button aria-label="Back">${line(28, "M16 2L7 12l9 10", 1.8)}</button>
          <button class="dim" aria-label="Forward">${line(28, "M8 2l9 10-9 10", 1.8)}</button>
          <button aria-label="Reload">
            ${icon(
              28,
              "0 0 28 28",
              svg`<path d="M24 20a12 12 0 1 1 0-11" fill="none" stroke="currentColor" stroke-width="2"/><circle cx="24" cy="10" r="3.600" fill="currentColor"/>`
            )}
          </button>
          <button aria-label="Home">${line(28, "M2 22.500V8.500L12 1.500l10 7v14zM9 22V13h6v9M12 13v9", 1.600)}</button>
          <button class="bookmark" aria-label="Bookmark">${line(28, "M5 1.500h14v21l-7-5-7 5z", 1.700)}</button>
        </div>
        <div class="address">
          <button aria-label="Site settings">
            ${icon(
              28,
              "0 0 28 28",
              svg`<g fill="none" stroke="#e6e6e6" stroke-width="2" stroke-linecap="round"><circle cx="8" cy="9" r="3"/><path d="M14 9h7M7 19h7"/><circle cx="20" cy="19" r="3"/></g>`
            )}
          </button>
          <input class="url" type="text" aria-label="Address" value="link-shrink.duckdns.org/prometheus/alerts" />
          <div class="address-tools">
            <button aria-label="Zoom">${line(26, "M19 10.500a8.500 8.500 0 1 1-17 0a8.500 8.500 0 0 1 17 0M17 17l6 6M7.500 10.500h6", 1.800)}</button>
            <button aria-label="Share">${line(27, "M2 7v13a2 2 0 0 0 2 2h16a2 2 0 0 0 2-2v-3M6 17c0-6 4-9 9-9h6M16 2.500l6 5.500-6 5.500", 1.600)}</button>
            <span class="rule"></span>
            <button aria-label="Shields">${brave(27)}</button>
            <button aria-label="Rewards">${braveTriangle}</button>
          </div>
        </div>
        <div class="extras">
          <button aria-label="Extensions">
            ${line(28, "M3 5.500h5c-.8-4.500 7-4.500 6.200 0H19v5c4.500-.8 4.500 6.500 0 6V22h-5c.500-4-6-4-5.500 0H3v-5.500c3.500.5 3.500-5.500 0-5z", 1.700)}
          </button>
          <button aria-label="Find in page">${line(28, "M2 2h20v20.500H2zM2 4.500h20M9.500 13a3 3 0 1 0 6 0a3 3 0 1 0-6 0M14.500 15.500l2 3", 1.700)}</button>
          <span class="mark"></span>
          <button aria-label="Media">
            ${line(28, "M9 20V5.500l13-3.800V17M9 20a3.500 3 0 1 1-7 0a3.500 3 0 1 1 7 0M22 17a3.500 3 0 1 1-7 0a3.500 3 0 1 1 7 0", 1.700)}
          </button>
          <button aria-label="Side panel">
            ${icon(
              28,
              "0 0 28 28",
              svg`<rect x="2" y="2" width="24" height="24" rx="2" fill="none" stroke="currentColor" stroke-width="2"/><path d="M18 2h8v24h-8z" fill="currentColor"/>`
            )}
          </button>
          <button aria-label="Wallet">${line(28, "M20 6V2.500H3.500a1.500 1.500 0 0 0-1.500 2C2.500 6 3.500 6 4.500 6H20a2 2 0 0 1 2 2v12a2 2 0 0 1-2 2H4a2 2 0 0 1-2-2V4M22 11h-6a2.500 2.500 0 0 0 0 6h6", 1.700)}</button>
          <button aria-label="Leo">
            ${line(28, "M10.500 2c1 6 2.500 7.500 8.500 9.500c-6 1.500-7.500 3-8.500 9.500c-1-6.500-2.500-8-8.500-9.500c6-2 7.500-3.500 8.500-9.500M19 17v6M16 20h6", 1.700)}
          </button>
          <button aria-label="VPN">
            ${line(28, "M12 1l9 3v8c0 6-4 9-9 11.500C7 21 3 18 3 12V4zM7 9.500c3-3 7-3 10 0M9 13c2-2 4-2 6 0M11.500 16h1", 1.700)}
          </button>
          <button aria-label="Menu">${line(28, "M1 2.500h22M1 12h22M1 21.500h22", 1.700)}</button>
        </div>
      </div>
    </div>`;
  }

  private renderHeader() {
    return html`<header class="header">
      <a class="brand" href="#">
        ${icon(36, "0 0 24 24", svg`<path d=${TORCH} fill="#f1f3f5"/>`)}<span>Prometheus</span>
      </a>
      <nav class="menu">
        <a href="#query">${line(20, "M3 10a7 7 0 1 0 14 0a7 7 0 1 0 -14 0M21 21l-6 -6", 1.800)}Query</a>
        <a class="current" href="#alerts">
          ${icon(
            20,
            "0 0 24 24",
            svg`<path fill="#fff" d="M14.235 19c.865 0 1.322 1.024 .745 1.668a3.992 3.992 0 0 1 -2.98 1.332a3.992 3.992 0 0 1 -2.98 -1.332c-.552 -.616 -.158 -1.579 .634 -1.661l.11 -.006h4.471zM12 2c1.358 0 2.506 .903 2.875 2.141l.046 .171l.008 .043a8.013 8.013 0 0 1 4.024 6.069l.028 .287l.019 .289v2.931l.021 .136a3 3 0 0 0 1.143 1.847l.167 .117l.162 .099c.86 .487 .56 1.766 -.377 1.864l-.116 .006h-16c-1.028 0 -1.387 -1.364 -.493 -1.87a3 3 0 0 0 1.472 -2.063l.021 -.143l.001 -2.97a8 8 0 0 1 3.821 -6.454l.248 -.146l.01 -.043a3.003 3.003 0 0 1 2.562 -2.29l.182 -.017l.176 -.004z"/>`
          )}Alerts
        </a>
        <button>
          ${line(
            20,
            "M3 7a3 3 0 0 1 3 -3h12a3 3 0 0 1 3 3v2a3 3 0 0 1 -3 3h-12a3 3 0 0 1 -3 -3zM3 15a3 3 0 0 1 3 -3h12a3 3 0 0 1 3 3v2a3 3 0 0 1 -3 3h-12a3 3 0 0 1 -3 -3zM7 8v.01M7 16v.01",
            1.8
          )}Status ${line(18, CHEVRON)}
        </button>
      </nav>
      <div class="tools">
        <button aria-label="Theme">
          ${icon(24, "0 0 24 24", svg`<circle cx="12" cy="12" r="9" fill="none" stroke="#fff" stroke-width="2"/><path d="M12 3a9 9 0 0 1 0 18z" fill="#fff"/>`)}
        </button>
        <button aria-label="Settings">
          ${line(
            24,
            "M10.325 4.317c.426 -1.756 2.924 -1.756 3.35 0a1.724 1.724 0 0 0 2.573 1.066c1.543 -.94 3.31 .826 2.37 2.37a1.724 1.724 0 0 0 1.065 2.572c1.756 .426 1.756 2.924 0 3.35a1.724 1.724 0 0 0 -1.066 2.573c.94 1.543 -.826 3.31 -2.37 2.37a1.724 1.724 0 0 0 -2.572 1.065c-.426 1.756 -2.924 1.756 -3.35 0a1.724 1.724 0 0 0 -2.573 -1.066c-1.543 .94 -3.31 -.826 -2.37 -2.37a1.724 1.724 0 0 0 -1.065 -2.572c-1.756 -.426 -1.756 -2.924 0 -3.35a1.724 1.724 0 0 0 1.066 -2.573c-.94 -1.543 .826 -3.31 2.37 -2.37c1 .608 2.296 .07 2.572 -1.065M9 12a3 3 0 1 0 6 0a3 3 0 0 0 -6 0"
          )}
        </button>
        <button aria-label="Documentation">
          ${line(24, "M3 19a9 9 0 0 1 9 0a9 9 0 0 1 9 0M3 6a9 9 0 0 1 9 0a9 9 0 0 1 9 0M3 6v13M12 6v13M21 6v13")}
        </button>
      </div>
    </header>`;
  }

  private renderDetails() {
    return html`<div class="body">
      <pre class="code"><span class="fn">histogram_quantile</span>(<span class="num">0.95</span>, <span class="fn">sum</span> <span class="fn">by</span> (<span class="lab">le</span>, <span class="lab">endpoint</span>) (<span class="fn">rate</span>(http_request_duration_seconds_bucket[<span class="num">5m</span>]))) &gt; <span class="num">1</span></pre>
      <div class="line">
        <span class="badge for">
          ${line(14, "M20.500 13A8.800 8.800 0 1 0 12 21M12 7v5l2 2M17 17v5M21 17v5", 2)}for: 2m
        </span>
      </div>
      <div class="line"><span class="badge">severity="warning"</span></div>
      <table class="notes">
        <tbody>
          ${ANNOTATIONS.map(([key, text]) => html`<tr><th scope="row">${key}</th><td>${text}</td></tr>`)}
        </tbody>
      </table>
      <table class="alerts">
        <thead>
          <tr>
            <th>Alert labels</th>
            <th class="c-state">State</th>
            <th class="c-since">Active Since</th>
            <th class="c-value">Value</th>
          </tr>
        </thead>
        <tbody>
          ${ALERTS.map(
            (a) => html`<tr>
              <td><div class="badges">${a.labels.map((l) => html`<span class="badge">${l}</span>`)}</div></td>
              <td><span class="badge ${a.state}">${a.state}</span></td>
              <td>${a.since}</td>
              <td>${a.value}</td>
            </tr>`
          )}
        </tbody>
      </table>
    </div>`;
  }

  private renderRule(rule: Rule) {
    const expanded = this.open.has(rule.name);
    return html`<section class=${classMap({ item: true, firing: rule.health === "firing", expanded })}>
      <h3>
        <button class="item-head" aria-expanded=${expanded} @click=${() => this.toggle(rule.name)}>
          <span class="item-name">${rule.name}</span>
          <span class="badges">
            ${rule.counts.map((c) => html`<span class="badge ${c.state}">${c.state} (${c.count})</span>`)}
          </span>
          <span class=${classMap({ up: expanded })}>${line(20, CHEVRON, 1.8)}</span>
        </button>
      </h3>
      ${expanded && rule.health === "firing" ? this.renderDetails() : nothing}
    </section>`;
  }

  private renderTaskbar() {
    return html`<footer class="taskbar">
      <button class="weather">
        ${cloud}
        <span class="reading"><span>72°F</span><span class="soft">Mostly cloudy</span></span>
        <span class="bubble">1</span>
      </button>
      <div class="apps">
        <button class="app" aria-label="Start">${start}</button>
        <button class="search">${line(22, "M17 9a6.500 7 0 1 1-13 0a6.500 7 0 1 1 13 0M15.500 14.500L21 21", 2.200)}Search</button>
        ${APPS.map(
          (a) => html`<button
            class=${classMap({ app: true, active: a.mark === "active", open: a.mark === "open" })}
            aria-label=${a.name}
          >
            ${a.icon}
            ${a.badge
              ? html`<span class=${classMap({ bubble: true, wide: a.badge.length > 2, red: !!a.red })}>${a.badge}</span>`
              : nothing}
          </button>`
        )}
      </div>
      <div class="tray">
        <button aria-label="Hidden icons">${line(22, "M4 16l8-8 8 8", 2)}</button>
        <button class="lang"><span>ENG</span><span>IN</span></button>
        <button class="status" aria-label="Network, sound and battery">
          ${icon(
            24,
            "0 0 24 24",
            svg`<g fill="none" stroke="#fff" stroke-width="2" stroke-linecap="round"><path d="M1 9.500c6-6.500 16-6.500 22 0" stroke="#555"/><path d="M4 12.500c4.500-4.500 11.500-4.500 16 0M7.500 16c2.500-2.500 6.500-2.500 9 0"/></g><circle cx="12" cy="19" r="2.200" fill="#fff"/>`
          )}
          ${icon(
            24,
            "0 0 24 24",
            svg`<g fill="none" stroke="#fff" stroke-width="1.800" stroke-linecap="round" stroke-linejoin="round"><path d="M1 9v6h4l5 4.500v-15L5 9zM13.500 9a4 4 0 0 1 0 6M16.500 6a8 8 0 0 1 0 12"/><path d="M19.500 3.500a12 12 0 0 1 0 17" stroke="#555"/></g>`
          )}
          ${html`<svg width="31" height="18" viewBox="0 0 31 18" aria-hidden="true">
            <rect x="1" y="2" width="27" height="14" rx="4" fill="none" stroke="#fff" stroke-width="2" />
            <rect x="4" y="5" width="13" height="8" fill="#f0a30a" />
            <path d="M29 6c2 1 2 5 0 6z" fill="#fff" stroke="#fff" />
          </svg>`}
        </button>
        <button class="clock"><span>10:25 AM</span><span>4/5/2026</span></button>
      </div>
    </footer>`;
  }

  render() {
    return html`
      ${this.renderTabs()} ${this.renderToolbar()}
      <div class="view">
        <div>
          ${this.renderHeader()}
          <main class="card">
            <div class="group">
              <h2><a href="#url-shortener-alerts">url-shortener-alerts</a></h2>
              <span class="file">/etc/prometheus/alerts.yml</span>
              <div class="badges">
                <span class="badge firing">firing (1)</span>
                <span class="badge inactive">inactive (3)</span>
              </div>
            </div>
            <div class="rules">${RULES.map((r) => this.renderRule(r))}</div>
          </main>
        </div>
        <div class="scroll" aria-hidden="true">
          ${icon(14, "0 0 14 14", svg`<path d="M7 2l5.500 9h-11z" fill="currentColor" stroke="currentColor" stroke-width="2" stroke-linejoin="round"/>`)}
          <div class="thumb"></div>
          ${icon(14, "0 0 14 14", svg`<path d="M7 12l5.500-9h-11z" fill="currentColor" stroke="currentColor" stroke-width="2" stroke-linejoin="round"/>`)}
        </div>
      </div>
      ${this.renderTaskbar()}
    `;
  }
}
